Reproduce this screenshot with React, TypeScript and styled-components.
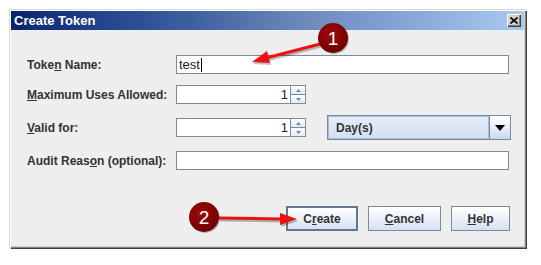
import styled, { createGlobalStyle } from "styled-components";

const GlobalStyle = createGlobalStyle`
  body {
    margin: 0;
    background: #ffffff;
    font-family: "Liberation Sans", Arial, sans-serif;
  }
`;

const Page = styled.div`
  position: relative;
  width: 541px;
  height: 265px;
  padding: 9px 0 0 9px;
  box-sizing: border-box;
`;

const Window = styled.div`
  width: 518px;
  height: 240px;
  box-sizing: border-box;
  display: flex;
  flex-direction: column;
  padding: 2px 3px 3px 2px;
  background: #d4d0c8;
  box-shadow: inset 1px 1px 0 #dcdad4, inset 2px 2px 0 #ffffff,
    inset -1px -1px 0 #404040, inset -2px -2px 0 #808080;
`;

const TitleBar = styled.div`
  height: 19px;
  display: flex;
  align-items: center;
  justify-content: space-between;
  padding: 0 3px 0 3px;
  background: linear-gradient(
    90deg,
    #0a246a 0%,
    #1f3f8a 15%,
    #3e5f9f 35%,
    #6886b8 55%,
    #84a2d4 75%,
    #a6caf0 100%
  );
  color: #ffffff;
  font-size: 13px;
  font-weight: bold;
`;

const CloseButton = styled.div`
  width: 14px;
  height: 13px;
  box-sizing: border-box;
  display: flex;
  align-items: center;
  justify-content: center;
  background: #d4d0c8;
  box-shadow: inset 1px 1px 0 #ffffff, inset -1px -1px 0 #404040,
    inset -2px -2px 0 #808080;
`;

const Body = styled.div`
  flex: 1;
  display: flex;
  flex-direction: column;
  background: #eeeeee;
  padding: 25px 15px 0 16px;
`;

const Form = styled.div`
  display: flex;
  flex-direction: column;
  gap: 11px;
`;

const Row = styled.div<{ $h: number }>`
  display: grid;
  grid-template-columns: 149px 1fr;
  align-items: center;
  height: ${(p) => p.$h}px;
`;

const Label = styled.span`
  font-size: 12px;
  font-weight: bold;
  color: #333333;
`;

const Field = styled.div<{ $w?: number }>`
  width: ${(p) => (p.$w ? `${p.$w}px` : "auto")};
  height: 19px;
  box-sizing: border-box;
  display: flex;
  align-items: center;
  padding: 0 2px;
  background: #ffffff;
  border: 1px solid #7a8a99;
  font-size: 13px;
  color: #222222;
`;

const Caret = styled.span`
  width: 1px;
  height: 14px;
  background: #000000;
  margin-left: 1px;
`;

const Spinner = styled.div`
  display: flex;
  align-items: center;
`;

const NumberField = styled(Field)`
  justify-content: flex-end;
  padding-right: 2px;
`;

const SpinButtons = styled.div`
  width: 15px;
  height: 19px;
  box-sizing: border-box;
  display: flex;
  flex-direction: column;
  border: 1px solid #7a8a99;
  border-left: none;
`;

const SpinHalf = styled.div<{ $down?: boolean }>`
  flex: 1;
  display: flex;
  align-items: center;
  justify-content: center;
  background: linear-gradient(#ffffff, #e3ebf5);
  border-top: ${(p) => (p.$down ? "1px solid #7a8a99" : "none")};
`;

const Combo = styled.div`
  margin-left: 21px;
  width: 184px;
  height: 25px;
  box-sizing: border-box;
  display: flex;
  border: 1px solid #7a8a99;
`;

const ComboValue = styled.div`
  flex: 1;
  display: flex;
  align-items: center;
  padding-left: 7px;
  border: 1px solid #a3bde3;
  background: linear-gradient(#e4ecf7, #d5e1f1);
  font-size: 12px;
  font-weight: bold;
  color: #333333;
`;

const ComboArrow = styled.div`
  width: 20px;
  display: flex;
  align-items: center;
  justify-content: center;
  border-left: 1px solid #7a8a99;
  background: linear-gradient(#ffffff 0%, #e8eff8 50%, #c9d8ec 100%);
`;

const ButtonRow = styled.div`
  margin-top: 36px;
  display: flex;
  justify-content: flex-end;
  gap: 10px;
  margin-right: -1px;
`;

const Button = styled.div<{ $w: number; $focused?: boolean }>`
  width: ${(p) => p.$w}px;
  height: 25px;
  box-sizing: border-box;
  display: flex;
  align-items: center;
  justify-content: center;
  border: ${(p) => (p.$focused ? "2px solid #63788f" : "1px solid #7a8a99")};
  background: linear-gradient(#ffffff 0%, #eef3fa 45%, #d4e2f3 100%);
  font-size: 12px;
  font-weight: bold;
  color: #333333;
`;

const Overlay = styled.svg`
  position: absolute;
  left: 0;
  top: 0;
  pointer-events: none;
`;

function SpinArrow({ down }: { down?: boolean }) {
  return (
    <svg width="5" height="3" viewBox="0 0 5 3">
      <path d={down ? "M0 0 H5 L2.5 3 Z" : "M0 3 H5 L2.5 0 Z"} fill="#7a8a99" />
    </svg>
  );
}

function Callout({ cx, cy, n }: { cx: number; cy: number; n: string }) {
  return (
    <g>
      <circle cx={cx + 1} cy={cy + 1} r={15} fill="rgba(0,0,0,0.25)" />
      <circle cx={cx} cy={cy} r={15} fill="url(#bead)" />
      <text
        x={cx}
        y={cy + 7}
        textAnchor="middle"
        fontSize="19"
        fill="#ffffff"
        fontFamily="Liberation Sans, Arial, sans-serif"
      >
        {n}
      </text>
    </g>
  );
}

function SpinBox() {
  return (
    <>
      <NumberField $w={115}>1</NumberField>
      <SpinButtons>
        <SpinHalf>
          <SpinArrow />
        </SpinHalf>
        <SpinHalf $down>
          <SpinArrow down />
        </SpinHalf>
      </SpinButtons>
    </>
  );
}

export default function App() {
  return (
    <Page>
      <GlobalStyle />
      <Window>
        <TitleBar>
          <span>Create Token</span>
          <CloseButton>
            <svg width="8" height="7" viewBox="0 0 8 7">
              <path d="M0.5 0.5 L7.5 6.5 M7.5 0.5 L0.5 6.5" stroke="#000" strokeWidth="1.6" />
            </svg>
          </CloseButton>
        </TitleBar>
        <Body>
          <Form>
            <Row $h={19}>
              <Label>
                Toke<u>n</u> Name:
              </Label>
              <Field>
                test
                <Caret />
              </Field>
            </Row>
            <Row $h={19}>
              <Label>
                <u>M</u>aximum Uses Allowed:
              </Label>
              <Spinner>
                <SpinBox />
              </Spinner>
            </Row>
            <Row $h={25}>
              <Label>
                <u>V</u>alid for:
              </Label>
              <Spinner>
                <SpinBox />
                <Combo>
                  <ComboValue>Day(s)</ComboValue>
                  <ComboArrow>
                    <svg width="10" height="6" viewBox="0 0 10 6">
                      <path d="M0 0 H10 L5 6 Z" fill="#000" />
                    </svg>
                  </ComboArrow>
                </Combo>
              </Spinner>
            </Row>
            <Row $h={19}>
              <Label>
                Audit Reas<u>o</u>n (optional):
              </Label>
              <Field />
            </Row>
          </Form>
          <ButtonRow>
            <Button $w={72} $focused>
              C<u>r</u>eate
            </Button>
            <Button $w={73}>
              <u>C</u>ancel
            </Button>
            <Button $w={59}>
              <u>H</u>elp
            </Button>
          </ButtonRow>
        </Body>
      </Window>
      <Overlay width="541" height="265" viewBox="0 0 541 265">
        <defs>
          <radialGradient id="bead" cx="40%" cy="35%" r="70%">
            <stop offset="0%" stopColor="#9e0a0a" />
            <stop offset="100%" stopColor="#6e0000" />
          </radialGradient>
        </defs>
        <g opacity="0.25" transform="translate(1,2)">
          <path d="M320 44 L266 58" stroke="#000" strokeWidth="3" />
          <path d="M252 62 L267 51 L270 63 Z" fill="#000" />
          <path d="M219 218 L282 219" stroke="#000" strokeWidth="3" />
          <path d="M297 219 L280 213 L280 225 Z" fill="#000" />
        </g>
        <path d="M320 44 L266 58" stroke="#ee1111" strokeWidth="3" />
        <path d="M252 62 L267 51 L270 63 Z" fill="#ee1111" />
        <path d="M219 218 L282 219" stroke="#ee1111" strokeWidth="3" />
        <path d="M297 219 L280 213 L280 225 Z" fill="#ee1111" />
        <Callout cx={333} cy={38} n="1" />
        <Callout cx={204} cy={217} n="2" />
      </Overlay>
    </Page>
  );
}
